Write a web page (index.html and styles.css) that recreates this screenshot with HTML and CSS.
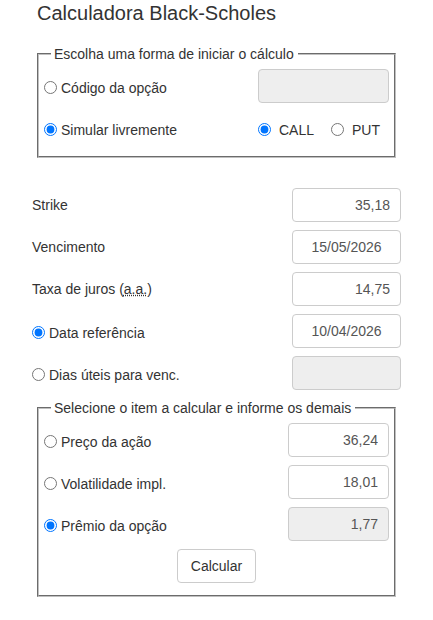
FILE: index.html
```html
<!DOCTYPE html>
<html lang="pt-BR">
<head>
<meta charset="utf-8">
<title>Calculadora Black-Scholes</title>
<link rel="stylesheet" href="styles.css">
</head>
<body>
<div class="calc">
  <h1 class="title">Calculadora Black-Scholes</h1>

  <fieldset class="box box-start">
    <legend class="box-legend">Escolha uma forma de iniciar o cálculo</legend>
    <label class="radio-label"><input type="radio" name="modo" class="radio"> Código da opção</label>
    <input type="text" class="field field-disabled field-code" disabled>
    <label class="radio-label"><input type="radio" name="modo" class="radio" checked> Simular livremente</label>
    <div class="type-group">
      <label class="type-label"><input type="radio" name="tipo" class="radio radio-type" checked>CALL</label>
      <label class="type-label"><input type="radio" name="tipo" class="radio radio-type">PUT</label>
    </div>
  </fieldset>

  <div class="params">
    <span class="param-label">Strike</span>
    <input type="text" class="field field-num" value="35,18">
    <span class="param-label">Vencimento</span>
    <input type="text" class="field field-date" value="15/05/2026">
    <span class="param-label">Taxa de juros (<abbr title="ao ano">a.a.</abbr>)</span>
    <input type="text" class="field field-num" value="14,75">
    <label class="radio-label radio-label-flush"><input type="radio" name="ref" class="radio" checked> Data referência</label>
    <input type="text" class="field field-date" value="10/04/2026">
    <label class="radio-label radio-label-flush"><input type="radio" name="ref" class="radio"> Dias úteis para venc.</label>
    <input type="text" class="field field-disabled" disabled>
  </div>

  <fieldset class="box box-calc">
    <legend class="box-legend">Selecione o item a calcular e informe os demais</legend>
    <label class="radio-label"><input type="radio" name="item" class="radio"> Preço da ação</label>
    <input type="text" class="field field-num" value="36,24">
    <label class="radio-label"><input type="radio" name="item" class="radio"> Volatilidade impl.</label>
    <input type="text" class="field field-num" value="18,01">
    <label class="radio-label"><input type="radio" name="item" class="radio" checked> Prêmio da opção</label>
    <input type="text" class="field field-num field-disabled" value="1,77" disabled>
    <div class="actions">
      <button type="button" class="btn">Calcular</button>
    </div>
  </fieldset>
</div>
</body>
</html>
```

FILE: styles.css
```css
html, body {
  margin: 0;
  padding: 0;
  background: #fff;
}

body {
  font-family: "Liberation Sans", Arial, sans-serif;
  font-size: 14px;
  color: #333;
}

.calc {
  width: 369px;
  margin: 0 auto;
}

.title {
  margin: 0 0 21px 5px;
  padding-top: 2px;
  font-size: 20px;
  line-height: 23px;
  font-weight: normal;
  color: #333;
}

.box {
  margin: 0 5px;
  border: 2px groove #c0c0c0;
  padding: 7px 5px 11px 5px;
  min-width: 0;
  display: grid;
  row-gap: 8px;
  align-items: center;
}

.box-legend {
  margin-left: 7px;
  padding: 0 4px 0 3px;
  line-height: 16px;
  font-size: 14px;
  color: #333;
}

.box-start {
  grid-template-columns: 1fr 131px;
  grid-auto-rows: 34px;
  margin-bottom: 30px;
}

.box-calc {
  grid-template-columns: 1fr 101px;
  grid-auto-rows: 34px;
  padding-bottom: 12px;
}

.radio-label {
  display: flex;
  align-items: center;
  white-space: nowrap;
  padding-top: 3px;
}

.radio {
  width: 13px;
  height: 13px;
  margin: 0 4px 0 0;
}

.type-group {
  display: flex;
  align-items: center;
  padding-top: 3px;
}

.type-label {
  display: flex;
  align-items: center;
  margin-right: 17px;
}

.radio-type {
  margin-right: 8px;
}

.params {
  display: grid;
  grid-template-columns: 1fr 109px;
  grid-auto-rows: 34px;
  row-gap: 8px;
  align-items: center;
  margin-bottom: 10px;
}

.param-label {
  white-space: nowrap;
}

abbr[title] {
  text-decoration: underline dotted;
  cursor: help;
}

.field {
  box-sizing: border-box;
  width: 100%;
  height: 34px;
  margin: 0;
  padding: 0 10px;
  border: 1px solid #ccc;
  border-radius: 4px;
  background: #fff;
  font-family: "Liberation Sans", Arial, sans-serif;
  font-size: 14px;
  color: #555;
}

.field-num {
  text-align: right;
}

.field-date {
  text-align: center;
}

.field-disabled {
  background: #eee;
  color: #555;
  -webkit-text-fill-color: #555;
  opacity: 1;
}

.actions {
  grid-column: 1 / -1;
  display: flex;
  justify-content: center;
}

.btn {
  box-sizing: border-box;
  height: 34px;
  padding: 0 13px;
  border: 1px solid #ccc;
  border-radius: 4px;
  background: #fff;
  font-family: "Liberation Sans", Arial, sans-serif;
  font-size: 14px;
  color: #333;
}
```
